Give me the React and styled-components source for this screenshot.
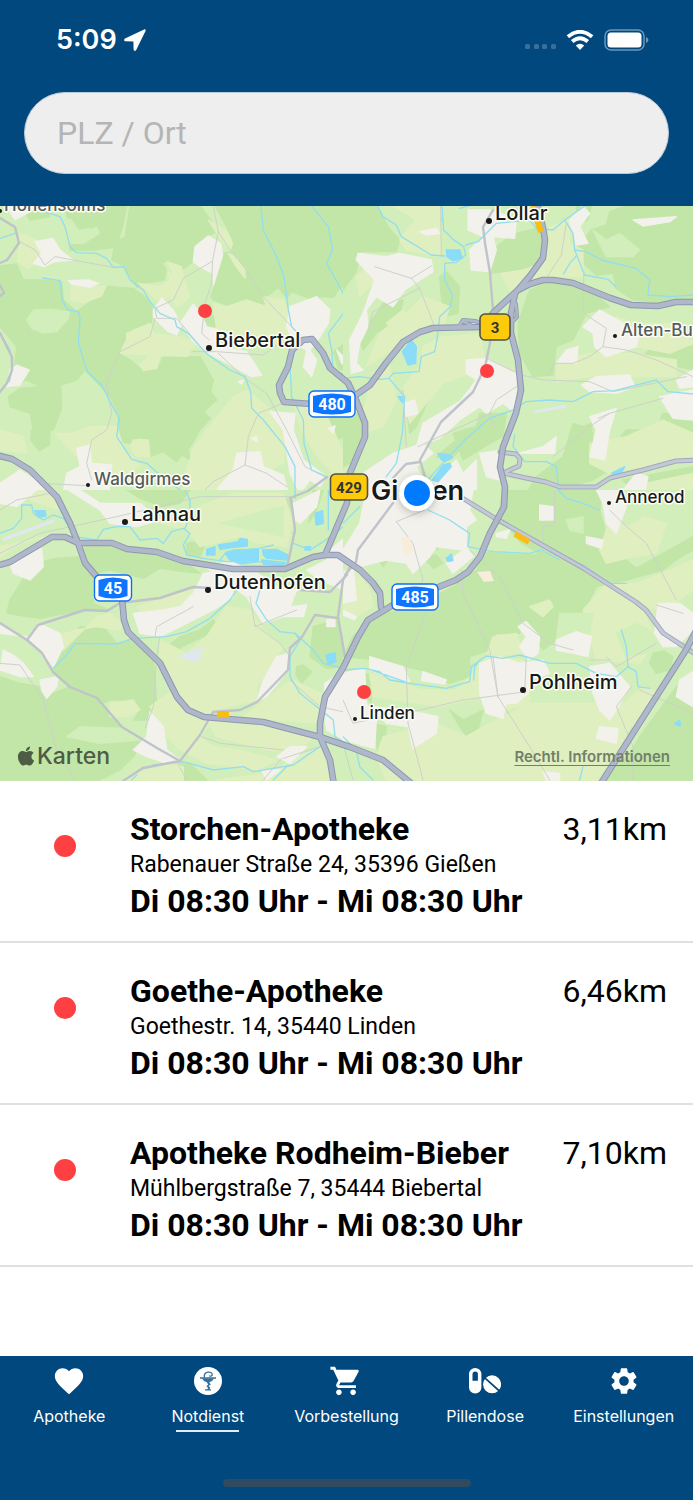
import React from "react";
import styled, { createGlobalStyle } from "styled-components";
import { MdFavorite, MdShoppingCart, MdSettings } from "react-icons/md";
import { FaApple } from "react-icons/fa";

const NAVY = "#00487d";
const RED = "#ff4043";

const GlobalStyle = createGlobalStyle`
  * { box-sizing: border-box; }
  body { margin: 0; background: #fff; color: #000; font-family: Roboto, sans-serif; }
`;

const Screen = styled.div`
  min-height: 100vh;
  display: flex;
  flex-direction: column;
`;

const Header = styled.header`
  background: ${NAVY};
  padding: 20px 24px 32px;
`;

const StatusBar = styled.div`
  height: 40px;
  margin-bottom: 32px;
  padding: 0 20px 0 32px;
  display: flex;
  align-items: center;
  justify-content: space-between;
  color: #fff;
`;

const StatusGroup = styled.div`
  display: flex;
  align-items: center;
  gap: ${(p) => p.$gap}px;
`;

const Clock = styled.time`
  font: 600 27px/40px Inter, sans-serif;
`;

const SearchInput = styled.input`
  display: block;
  width: 100%;
  height: 82px;
  padding: 0 32px;
  border: 1px solid #b9c9d6;
  border-radius: 41px;
  background: #eee;
  color: #222;
  font: 400 32px/40px Roboto, sans-serif;
  outline: none;
  &::placeholder { color: #b5b5b5; opacity: 1; }
`;

const MapFrame = styled.section`
  position: relative;
  aspect-ratio: 693 / 575;
  overflow: hidden;
  background: #d2eeba;
`;

const MapDrawing = styled.svg`
  display: block;
  width: 100%;
  height: 100%;
`;

const PlaceName = styled.text`
  font: ${(p) => p.$weight || 500} ${(p) => p.$size}px Inter, sans-serif;
  fill: ${(p) => (p.$muted ? "#555a58" : "#17191b")};
  stroke: #fbfdf6;
  stroke-width: 3px;
  stroke-linejoin: round;
  paint-order: stroke;
`;

const ShieldText = styled.text`
  font: 700 ${(p) => (p.$dark ? 15 : 16)}px Roboto, sans-serif;
  text-anchor: middle;
  fill: ${(p) => (p.$dark ? "#333" : "#fff")};
`;

const MapCredit = styled.div`
  position: absolute;
  left: 15px;
  bottom: 9px;
  display: flex;
  align-items: center;
  color: #4d5c43;
  font: 500 23px/32px Inter, sans-serif;
`;

const LegalLink = styled.a`
  position: absolute;
  right: 23px;
  bottom: 14px;
  color: #72806a;
  font: 600 15px/20px Inter, sans-serif;
  text-decoration: underline;
  text-underline-offset: 3px;
`;

const PharmacyList = styled.ul`
  margin: 0;
  padding: 0;
  list-style: none;
`;

const PharmacyRow = styled.li`
  display: flex;
  align-items: flex-start;
  padding: 28px 26px 20px 54px;
  border-bottom: 2px solid #e0e0e0;
`;

const Dot = styled.span`
  flex: none;
  width: 22px;
  height: 22px;
  margin: 26px 54px 0 0;
  border-radius: 50%;
  background: ${RED};
`;

const Details = styled.div`
  flex: 1;
  min-width: 0;
`;

const Name = styled.h2`
  margin: 0;
  font: 700 32px/40px Roboto, sans-serif;
`;

const Address = styled.p`
  margin: 0;
  font: 400 23px/32px Roboto, sans-serif;
`;

const Hours = styled.p`
  margin: 0;
  font: 700 32px/40px Roboto, sans-serif;
`;

const Distance = styled.span`
  font: 400 32px/40px Roboto, sans-serif;
`;

const BottomNav = styled.nav`
  margin-top: auto;
  padding: 8px 0 13px;
  background: ${NAVY};
`;

const Tabs = styled.div`
  display: grid;
  grid-template-columns: repeat(5, 1fr);
`;

const Tab = styled.a`
  display: flex;
  flex-direction: column;
  align-items: center;
  color: #fff;
  text-decoration: none;
  font: 400 16px/20px Inter, sans-serif;
  &::after {
    content: "";
    width: 63px;
    height: 2px;
    margin-top: 4px;
    background: ${(p) => (p.$active ? "#e6edf2" : "transparent")};
  }
`;

const TabIcon = styled.span`
  height: 34px;
  margin-bottom: 8px;
  display: flex;
  align-items: center;
`;

const HomeIndicator = styled.div`
  width: 248px;
  height: 8px;
  margin: 47px auto 0;
  border-radius: 4px;
  background: #304a5f;
`;

/* Land cover, four quadrants of the map drawn at triple scale */
const QUADRANTS = [
  {
    x: 0,
    y: 200,
    forest: [
      "M195 18H380L370 70 355 120 375 112 390 18H600L640 70 650 95 615 112 590 130 585 180 540 215 505 185 492 240 430 250 410 262 372 198 335 180 343 142 280 150 210 152 205 105 250 115 298 98 270 82 230 88 205 72Z",
      "M645 18H1050V255L1020 262 1000 292 960 290 940 300 875 275 860 295 835 262 800 290 790 318 745 298 690 320 640 300 632 290 650 240 668 160 690 155 735 235 738 210 695 150 698 120 680 80Z",
      "M0 198 50 192 70 240 120 240 185 245 190 300 230 335 290 290 318 258 360 262 400 265 440 295 462 330 452 372 400 385 372 425 358 460 390 480 430 512 470 510 490 472 600 470 640 540 632 575 650 600 610 635 632 655 600 690 565 750 570 780 545 765 530 785 490 755 450 770 445 720 418 712 392 730 370 728 352 680 358 645 330 590 255 510 230 540 182 555 185 625 160 690 100 690 90 640 30 620 25 590 60 565 120 560 80 540 20 560 45 490 50 440 0 380Z",
      "M95 690 120 668 150 690 148 735 118 753 92 720Z",
      "M560 350 580 320 615 345 640 350 650 380 620 382 595 360Z",
      "M1000 455 1050 420V520L1015 505Z",
      "M975 655 1045 650 1050 700 1010 720 975 690Z",
      "M60 18 130 18 150 50 90 60Z",
    ],
    meadow: [
      "M80 360 100 330 150 328 208 335 205 355 170 395 130 400 95 385Z",
      "M170 50 215 60 240 100 290 82 298 100 250 130 210 130Z",
      "M490 190 515 220 500 190Z",
    ],
    field: [
      "M60 100 110 120 120 180 85 205 52 185Z",
      "M215 255 260 262 318 258 305 288 250 308 212 300Z",
      "M500 185 545 200 550 230 570 290 530 320 510 295 470 300 440 270 415 250 480 260 510 240Z",
      "M625 60 680 95 698 130 690 150 650 100Z",
      "M685 160 710 175 735 210 735 235 705 195Z",
      "M360 460 380 420 380 400 450 370 460 400 540 410 590 430 560 470 480 465 470 505 430 512 420 495 450 465Z",
      "M640 310 680 320 740 300 800 320 790 290 850 300 865 340 870 400 830 440 690 440 650 390Z",
      "M620 690 700 590 740 570 790 610 820 640 860 700 850 790 790 820 740 850 600 895 545 880 560 810 580 745Z",
      "M400 720 445 720 450 770 410 770 390 740Z",
      "M165 700 215 700 270 680 350 680 370 740 420 800 310 860 260 800 220 760Z",
      "M0 690 70 710 80 760 0 750Z",
      "M880 620 970 625 1050 800V870L960 780 910 700Z",
    ],
    town: [
      "M18 18H110L90 35 45 60Z",
      "M105 125 158 115 180 150 218 180 165 185 130 200 100 190 125 160Z",
      "M585 140 625 108 662 130 668 165 640 255 638 220 600 200 580 185Z",
      "M205 242 265 240 295 250 270 262 215 252Z",
      "M460 330 485 295 520 330 540 370 580 312 605 345 620 380 655 390 660 440 740 455 785 525 755 530 700 500 655 475 615 455 575 420 545 370 530 405 505 395 460 350Z",
      "M870 320 950 290 990 330 985 370 960 410 930 450 950 480 935 530 910 500 920 450 880 430 860 380Z",
      "M50 495 88 510 60 555 20 560 30 510Z",
      "M810 635 885 640 880 690 910 780 980 830 960 860 930 840 900 880 870 820 850 690Z",
      "M230 745 268 735 275 790 335 795 325 900H250L190 875 200 820 240 800Z",
      "M710 760 780 755 790 800 850 825 870 900H740L650 870 700 810Z",
      "M0 850 60 810 150 870 170 900H0Z",
      "M985 685 1005 678 1000 700Z",
      "M715 545 730 540 725 552Z",
      "M755 715 770 710 772 725Z",
      "M1010 450 1040 480 1050 510 1025 490Z",
    ],
    water: [],
    river: [
      "M140 38 180 50 195 80 210 140 230 158 290 160 320 175 340 202 372 200 390 240 430 270 450 305 480 340 525 360 530 380 565 400 600 440 625 465 690 510 735 530 752 575 755 625 790 660 855 740 885 800 885 895",
      "M128 234 180 242 187 300 203 330 235 335 240 355 235 430 262 515 305 555 330 605 358 655 350 710 395 778 440 790 480 825 540 870 565 900",
      "M783 18 790 90 830 170 852 230 865 330 875 380 900 405 870 500 875 590 910 660 912 730 935 810 980 830",
      "M935 18 985 80 998 150 980 190 1035 290 1030 340 985 400 995 450 1000 510 1050 530",
      "M0 115 45 100",
      "M0 400 30 450 38 500 28 545",
    ],
    lane: [
      "M60 125 105 150 135 195 165 170 340 202 370 202",
      "M640 18 655 95 690 150 735 205 790 290 875 380",
      "M655 95 638 180 635 250 615 310 605 400 628 420",
      "M635 185 550 235 520 300 465 325 470 355 530 355 610 450",
      "M465 355 450 410 360 455 318 550 335 640 320 690 275 720 260 790 275 840",
      "M575 455 650 455 790 465 830 435",
      "M655 460 735 535 800 580 860 690 915 800 975 830",
      "M600 885 640 845 735 795 745 710 775 640 850 610",
      "M735 795 800 820 860 860",
      "M130 850 260 857",
    ],
  },
  {
    x: 343,
    y: 200,
    forest: [
      "M0 18H100L135 80 170 120 160 155 50 155 40 215 0 270Z",
      "M440 155 500 110 520 100 560 90 605 80 600 170 565 225 520 265 480 215 445 220Z",
      "M290 230 310 215 350 260 345 340 305 350 295 290Z",
      "M560 270 620 245 700 255 760 285 800 320 730 340 690 420 640 440 630 525 570 530 530 460 525 370Z",
      "M745 90 790 75 800 35 850 18H1050V295L950 308 870 300 820 265 810 220 760 225 720 190 700 190 700 140Z",
      "M700 18H745L735 60 700 70Z",
      "M940 425 1050 440V510L960 490 900 470Z",
      "M0 640 60 640 65 720 20 790 0 800Z",
      "M190 620 270 480 300 470 265 580 220 680 200 700Z",
      "M250 40 285 35 300 65 270 70Z",
      "M280 770 340 720 360 690 420 675 380 720 320 780Z",
      "M580 830 660 770 690 670 720 680 745 670 750 720 800 750 850 690 940 690 960 640 1050 650V720L880 740 830 790 750 840 640 870 640 900H540Z",
      "M840 840 1050 800V900H900Z",
      "M80 370 120 310 180 300 170 350 100 400 60 450 50 410Z",
      "M330 700 400 680 410 640 490 640 480 710 440 730 360 780Z",
    ],
    meadow: [
      "M750 90 790 120 830 100 890 150 870 170 790 170Z",
      "M640 550 760 530 880 560 920 540 960 600 900 630 800 640 710 640 620 700 550 690Z",
    ],
    field: [
      "M150 18 290 18 295 170 190 150 170 120 220 60Z",
      "M110 400 190 340 240 290 320 320 300 380 210 400 130 460 70 500Z",
      "M240 440 300 410 410 400 430 500 300 550 200 670 180 560 230 500Z",
      "M475 220 540 210 600 190 560 260 500 270Z",
      "M640 485 740 460 860 460 1000 480 1000 530 860 530 780 540 640 560Z",
      "M620 80 680 60 680 130 720 150 720 230 620 230 560 250 600 190Z",
      "M740 730 850 710 960 660 1050 700V770L900 800 800 820 740 790Z",
      "M820 350 880 370 1000 370 1050 430 980 460 880 440Z",
      "M90 520 140 500 160 600 120 680 60 700 60 640Z",
      "M860 860 1050 820V900H900Z",
      "M130 370 180 330 190 350 150 390Z",
      "M40 230 100 180 110 230 50 290Z",
    ],
    town: [
      "M375 30H450L520 60 515 115 450 110 460 150 440 215 385 210 380 150 420 110 375 90Z",
      "M45 160 130 170 170 160 265 180 270 215 215 250 185 270 150 320 100 290 70 330 75 380 50 430 40 490 60 510 25 520 20 420 60 340 95 240 40 180Z",
      "M680 60 720 18 740 40 710 80 735 130 700 135 690 100Z",
      "M370 480 430 475 520 520 518 640 480 610 430 640 410 620 350 660 290 715 220 740 240 670 350 605 370 580 400 540 370 520Z",
      "M720 380 770 330 825 360 890 400 880 440 790 470 755 440 750 400Z",
      "M640 490 670 450 705 440 700 490Z",
      "M715 555 760 530 860 525 875 560 820 580 740 575Z",
      "M740 650 820 625 800 690 785 780 740 770 760 690Z",
      "M950 590 1050 570V660L990 655Z",
      "M525 760 600 740 640 710 635 760Z",
      "M870 60 1000 50 980 65 900 78Z",
      "M60 820 150 760 240 730 270 760 220 800 250 860 340 780 360 820 400 780 400 900H30Z",
      "M410 760 480 750 470 840 430 830Z",
      "M840 870 880 820 915 830 900 900H820Z",
      "M180 610 215 600 225 640 190 650Z",
      "M230 95 280 85 290 100 250 105Z",
      "M1000 540 1050 510V560L1010 565Z",
    ],
    water: [
      "M310 150 350 150 358 175 330 182 312 170Z",
      "M178 455 205 420 220 440 218 490 195 495 185 470Z",
      "M268 840 300 795 320 790 325 800 285 845Z",
      "M805 820 845 800 835 820 815 825Z",
      "M165 590 178 590 178 608Z",
      "M285 760 320 765 328 772 305 785 295 778Z",
    ],
    river: [
      "M297 18 302 90 330 118 362 140 368 165 340 187 305 190 305 240 328 285 322 320 290 350 282 420 275 455 235 470 228 515 150 520 138 535 185 590 178 700 160 790 130 830",
      "M105 20 120 50 160 75 175 110 265 165 305 168",
      "M368 135 405 125 460 70 560 60 580 85 630 90 665 60 725 18",
      "M665 60 690 100 695 150 730 155 775 180 880 205 920 240 915 285 985 290 1050 285",
      "M695 150 725 225 795 238 818 260",
      "M700 168 680 190 662 222",
      "M0 535 50 530 110 538 138 535",
      "M245 850 290 800 365 720 440 655 510 630 550 605 620 600 690 605 750 575 815 572 940 540 975 575 1050 582",
      "M515 705 510 740 545 785 610 785 640 800 650 900",
      "M350 25 375 18",
    ],
    lane: [
      "M293 18 295 170M265 198 205 235 230 265 90 335 75 390M230 265 275 380M205 235 95 200",
      "M670 70 655 165 610 235M722 220 722 340 790 385 780 440 740 470 690 490 635 490 615 525M780 440 850 450 940 480 1050 530",
      "M430 475 535 525 600 540 740 545 810 575 1030 530M520 560 460 600 440 640 225 740M440 640 455 680",
      "M180 570 190 740M800 640 960 595M765 655 800 640 740 680 630 770",
    ],
  },
  {
    x: 0,
    y: 490,
    forest: [
      "M80 250 110 220 165 205 240 200 260 160 330 165 380 185 470 190 560 220 600 250 550 245 480 235 430 265 330 240 290 250 280 340 330 360 250 360 120 385 80 380 20 370 30 330Z",
      "M190 470 240 410 310 410 350 460 380 455 400 435 420 450 460 500 465 560 470 640 440 690 400 690 420 660 400 630 330 630 310 640 280 620 230 600 180 560 160 540Z",
      "M0 560 60 580 120 590 160 610 210 590 290 625 360 710 430 750 400 800 360 840 300 870H0Z",
      "M380 0H570L540 40 490 50 420 25Z",
      "M500 470 540 440 600 420 640 390 650 410 610 440 545 470 530 490Z",
      "M890 530 910 525 935 545 905 580 888 555Z",
      "M940 410 1010 390 1040 480V530L980 535 930 500Z",
      "M800 110 860 50 875 130 830 150Z",
      "M560 700 620 690 580 760 550 770 570 740Z",
      "M840 20 870 30 870 70 835 60Z",
      "M560 160 620 150 600 200 560 190Z",
      "M540 820 570 820 620 870H550Z",
      "M940 0 970 0 950 60 925 100 935 50Z",
    ],
    meadow: [
      "M660 100 800 60 850 50 850 140 760 120Z",
      "M200 740 240 710 370 715 420 750 300 760Z",
    ],
    field: [
      "M450 90 570 60 700 10 850 10 880 100 860 170 780 160 720 140 600 170 560 120Z",
      "M80 0H150L180 60 120 40 90 30Z",
      "M480 450 560 490 620 440 680 350 750 360 790 420 850 470 830 500 770 590 770 630 640 660 620 680 560 650 520 590 480 510Z",
      "M450 650 520 600 560 660 630 700 600 740 640 770 720 780 830 810 770 840 620 820 540 780 500 740Z",
      "M620 690 780 700 940 740 900 780 800 780 650 740Z",
      "M880 570 980 620 960 700 830 690 730 680 860 580Z",
      "M130 450 190 480 290 380 330 370 370 400 360 420 290 410 230 420Z",
      "M410 350 570 300 620 300 540 350 430 370Z",
      "M0 170 140 140 60 160 0 200Z",
      "M330 640 400 630 420 660 380 680 330 680Z",
      "M380 860 500 820 550 830 550 870H390Z",
      "M650 870 800 850 960 770 990 870Z",
    ],
    town: [
      "M0 0H110L50 50 0 40Z",
      "M205 0 240 0 300 40 420 40 480 90 410 110 330 100 300 60Z",
      "M30 225 125 175 130 230 90 270 40 250Z",
      "M0 400 80 450 115 400 180 430 190 470 160 530 130 490 80 440 0 430Z",
      "M400 370 490 360 540 350 580 310 610 250 690 240 700 320 640 360 560 400 480 440 420 430Z",
      "M615 230 690 215 760 240 830 290 890 300 870 350 920 345 910 380 850 380 790 400 740 320Z",
      "M400 780 440 740 450 665 490 710 500 780 540 810 500 820 440 800Z",
      "M830 500 865 490 865 540 800 620 770 635 790 570Z",
      "M10 480 40 495 70 520 100 560 60 560 0 540Z",
      "M120 570 175 560 170 590 140 625 125 600Z",
      "M880 40 960 0 950 50 900 100 885 90Z",
      "M990 180 1050 130V330L1030 300 960 270 920 240 980 210Z",
      "M975 580 1050 530V760L980 720 970 650Z",
      "M830 800 870 770 920 770 870 820Z",
      "M980 390 1005 385 1005 410 980 410Z",
      "M785 840 840 840 800 870Z",
    ],
    water: [
      "M675 190 700 180 775 178 775 215 720 222 690 210Z",
      "M788 180 830 178 865 195 862 210 800 205 790 195Z",
      "M620 178 645 170 645 195 620 195Z",
      "M655 165 715 155 720 145 742 148 742 168 700 172 660 178Z",
      "M105 62 135 62 138 78 115 82Z",
      "M945 70 968 62 970 100 948 105Z",
      "M978 495 1005 488 1008 515 985 525Z",
      "M785 210 858 218 850 228 790 222Z",
      "M915 170 932 170 930 180 915 180Z",
    ],
    river: [
      "M0 130 40 115 65 85 65 45 95 45 100 70 130 90 160 75 190 85 225 140 290 150 310 118 350 110 390 110 420 150 470 145 490 160 515 125 550 115 570 130 550 165 560 195 610 205 680 215 780 215 860 220",
      "M555 0 570 30 570 80 555 115",
      "M885 0 885 25M985 0V120M1050 95 1010 125 970 155 930 180 880 160",
      "M160 535 200 495 225 460 350 462 400 445 500 440 560 425 630 385 690 330 710 300",
      "M780 300 768 340 800 390 840 425 885 430 900 450 870 500 870 560 900 610 950 650 1000 690 1005 740 1050 770",
      "M885 430 940 480 970 520 1050 540",
      "M660 210 680 185 780 175 820 165",
      "M460 825 550 815 640 840 730 830 760 845 880 825 930 790 960 770M395 870 410 855",
      "M865 825 820 870",
    ],
    lane: [
      "M0 60 50 30 150 10M0 190 120 130 350 80 600 20 870 20",
      "M0 520 60 525 130 630 170 780 225 870",
      "M480 440 470 500 460 650 435 715M465 440 470 410 580 350",
      "M750 320 765 410 890 360M765 405 840 460 870 500",
      "M605 740 660 760 850 780M845 805 790 870M850 805 960 770M530 815 560 870",
      "M870 570 960 650 1050 670",
    ],
  },
  {
    x: 343,
    y: 490,
    forest: [
      "M480 0H780L770 60 800 170 880 235 960 190 1050 140V180L1000 210 960 240 850 270 760 290 720 370 740 410 700 430 640 450 600 480 540 390 530 430 460 430 440 480 380 500 380 560 320 580 250 545 190 530 110 510 0 500 30 440 100 370 200 360 330 290 400 240 460 110Z",
      "M320 660 360 690 420 660 405 720 380 750 350 710Z",
      "M570 670 645 670 640 720 580 715Z",
      "M930 490 960 480 990 500 980 540 940 550 920 520Z",
      "M890 740 1000 590 1050 570V870H780L860 790Z",
      "M550 780 600 740 620 760 590 810 540 810Z",
      "M670 710 700 720 710 770 680 760Z",
      "M60 550 85 555 85 640 70 620Z",
      "M90 700 130 710 120 810 105 790Z",
      "M250 130 280 140 285 180 265 160Z",
      "M240 200 280 195 300 220 270 235Z",
      "M290 100 340 125 360 150 310 130Z",
      "M60 60 110 55 95 80Z",
      "M100 200 150 190 120 230Z",
      "M920 720 1050 690V870H930Z",
    ],
    meadow: [
      "M480 100 530 160 580 190 520 190 390 180 430 130Z",
      "M670 90 720 80 720 130 680 120Z",
      "M650 370 750 370 740 430 640 450Z",
      "M820 430 880 400 920 420 960 480 850 500Z",
      "M0 110 50 20 80 0 120 20 60 120 0 180Z",
    ],
    field: [
      "M800 90 860 110 900 80 970 100 940 190 870 200 790 220 770 180Z",
      "M560 350 620 330 630 350 600 380Z",
      "M720 360 790 280 880 280 980 240 1050 210V300L980 350 900 360 940 450 890 520 760 510 740 440Z",
      "M380 560 430 500 540 510 560 590 560 640 450 670 420 620 290 650 90 620 80 550 140 570 240 600 340 600Z",
      "M280 700 370 740 440 700 560 640 850 640 870 690 850 740 760 870H130L100 800 120 740Z",
      "M450 440 520 430 540 490 430 500Z",
      "M0 240 40 240 80 300 90 350 40 380 0 370Z",
      "M830 650 900 590 950 610 890 720 850 700Z",
    ],
    town: [
      "M0 180 50 100 70 0H390L380 60 400 90 370 110 370 170 390 200 330 250 310 220 360 180 280 170 260 200 210 250 190 220 130 210 50 230 0 210Z",
      "M80 500 180 530 200 575 150 565 80 540Z",
      "M240 545 310 570 305 582 235 572Z",
      "M0 550 65 535 70 640 100 690 95 775 0 750Z",
      "M85 650 190 660 285 680 280 730 210 775 195 710 130 700Z",
      "M410 520 470 500 530 520 600 510 620 550 560 570 555 610 520 640 490 640 480 685 430 670 410 610Z",
      "M525 410 550 395 590 440 585 490 555 510 530 470 550 440Z",
      "M640 450 700 425 745 440 735 500 690 490 640 480Z",
      "M740 530 800 520 860 590 820 660 800 690 770 660 750 610Z",
      "M945 340 1010 340 1050 370V420L1000 470 960 470 935 430Z",
      "M760 0H835L850 50 820 130 790 100 780 40Z",
      "M770 710 825 715 820 760 760 745Z",
      "M590 45 630 50 630 90 590 90Z",
      "M730 140 780 150 775 175 730 160Z",
      "M1010 570 1050 545V650L1000 620Z",
      "M600 845 650 850 650 870H610Z",
      "M0 250 30 230 40 330 0 340Z",
      "M460 130 500 120 490 145 460 140Z",
      "M0 360 40 380 35 390 0 375Z",
    ],
    water: [
      "M310 205 325 192 330 212 315 215Z",
      "M995 702 1010 690 1012 708Z",
    ],
    river: [
      "M0 540 65 535 110 545 140 570 200 580 310 595 380 575 385 530 430 498 480 505 530 495 620 520 700 520 760 550 820 560 855 530 880 545 885 590 920 595M85 540 185 575M392 570 395 530 410 510",
      "M835 420 850 470 855 530M255 60 320 90 380 130 375 170 450 185 560 190 595 180 650 210M720 225 800 280 850 280",
      "M0 740 40 780 50 830 90 870M720 830 710 870M645 0 670 25 720 40 770 60M0 100 50 50",
    ],
    lane: [
      "M160 95 245 60 210 50M160 95 210 160 240 270 200 340M355 240 360 310 440 480 465 620 560 770 620 870",
      "M380 180 470 260 540 400 620 460 690 480M250 365 190 530 195 700",
      "M190 670 360 630 550 605M465 620 450 500M550 500 545 610",
      "M790 500 820 530 940 460M740 510 800 510M940 345 1020 370M820 650 870 770 870 870M865 590 820 650",
      "M635 0 635 105 600 110 600 180M800 60 840 100 910 160 1000 330M0 630 30 700 120 680M890 600 1050 670M0 760 30 870M195 700 240 870",
    ],
  },
];

const MOTORWAYS = [
  "M-4 455 12 459 30 470 57 497 70 523 78 543 85 563 97 577 122 598 124 620 128 632 160 663 177 697 188 710 204 717 263 722 320 737 350 747 383 760 412 784",
  "M-4 566 10 562 52 537 65 537 78 543 112 543 127 549 157 552 183 561 233 569 285 569 313 557 325 555 338 555 360 570 373 583 380 593 381 607",
  "M325 555 347 503 350 473 365 437 365 423 356 400 348 383 330 368 323 353 312 339 303 340 292 350 288 367 279 385 280 393 284 402 312 404",
  "M353 397 370 385 386 363 403 342 420 332 433 328 482 327 494 312 518 290 530 276 543 258 545 240 543 228 537 202",
  "M518 290 530 284 543 280 553 280 573 283 610 298 631 305 658 306 676 302 697 302",
  "M515 294 511 313 511 333 518 360 521 390 516 413 503 447 500 467 505 487 504 507 490 533 480 557 468 572 456 580 436 588 393 605 368 620 358 637 343 668 325 697 320 723 320 737 330 760 334 785",
  "M697 629 686 650 600 785",
];

const RAMPS = [
  "M459 326 463 320 475 321 484 324M462 321 477 328",
  "M516 304 517 317 512 322",
];

const HIGHWAYS = [
  "M464 499 493 517 583 568 636 602 646 610 663 633 697 655",
  "M503 473 526 478 546 482 560 487 596 487 610 478 643 470 676 461 697 460",
  "M500 452 516 454 520 459 519 466 503 473",
];

const SECONDARY = [
  "M493 210 483 227 485 243 490 273 493 310 490 343 485 367 473 392 441 422 420 460 425 477M420 462 406 464 393 478",
  "M393 503 358 550 356 562 345 575",
  "M0 623 27 640 42 653 53 672 70 687 97 698 122 727 157 748 180 761 200 735 213 712 240 710 257 702 288 670 290 648 302 637 315 615 337 618",
  "M27 640 38 625 85 610 107 611 120 603 160 598 193 587 210 588M300 590 330 592 347 575",
  "M350 567 343 580 338 617 345 657",
  "M123 781 143 768 180 761",
  "M0 263 7 260 19 243 15 227 0 218M0 333 12 357 12 370 7 383 0 392M0 285 4 293 0 296",
  "M290 498 308 491 327 477M291 499 295 530 288 563",
];

const PLACES = [
  { name: "Hohensolms", x: 4, y: 211, size: 17, muted: true, dot: [0, 211, 2] },
  { name: "Lollar", x: 495, y: 220, size: 20, dot: [489, 221, 3] },
  { name: "Biebertal", x: 215, y: 347, size: 20, dot: [209, 348, 3] },
  { name: "Alten-Buseck", x: 621, y: 336, size: 17, muted: true, dot: [615, 336, 2] },
  { name: "Waldgirmes", x: 94, y: 485, size: 17, muted: true, dot: [88, 485, 2] },
  { name: "Lahnau", x: 131, y: 521, size: 20, dot: [125, 522, 3] },
  { name: "Gießen", x: 371, y: 500, size: 27, weight: 600 },
  { name: "Annerod", x: 615, y: 503, size: 17, dot: [609, 503, 2] },
  { name: "Dutenhofen", x: 214, y: 589, size: 20, dot: [208, 590, 3] },
  { name: "Pohlheim", x: 529, y: 689, size: 20, dot: [523, 690, 3] },
  { name: "Linden", x: 360, y: 719, size: 17, dot: [355, 719, 2] },
];

const SHIELDS = [
  { label: "480", x: 332, y: 404, w: 46 },
  { label: "45", x: 113, y: 588, w: 37 },
  { label: "485", x: 415, y: 597, w: 46 },
  { label: "429", x: 349, y: 487, w: 37, yellow: true },
  { label: "3", x: 495, y: 327, w: 30, yellow: true },
];

const PINS = [[205, 311], [487, 371], [364, 692]];

const PHARMACIES = [
  { name: "Storchen-Apotheke", address: "Rabenauer Straße 24, 35396 Gießen", distance: "3,11km" },
  { name: "Goethe-Apotheke", address: "Goethestr. 14, 35440 Linden", distance: "6,46km" },
  { name: "Apotheke Rodheim-Bieber", address: "Mühlbergstraße 7, 35444 Biebertal", distance: "7,10km" },
];

const Shield = ({ label, x, y, w, yellow }) => {
  const l = x - w / 2;
  return (
    <g>
      <rect x={l} y={y - 13} width={w} height={26} rx={5}
        fill={yellow ? "#fecb0b" : "#fff"} stroke={yellow ? "#51504b" : "#0b70f8"} strokeWidth={yellow ? 1.6 : 1.4} />
      {!yellow && (
        <path fill="#0d75ff" d={`M${l + 4} ${y - 8}Q${x} ${y - 13} ${l + w - 4} ${y - 8}V${y + 8}Q${x} ${y + 13} ${l + 4} ${y + 8}Z`} />
      )}
      <ShieldText x={x} y={y + 6} $dark={yellow}>{label}</ShieldText>
    </g>
  );
};

const Strokes = ({ paths, color, width }) => (
  <g fill="none" stroke={color} strokeWidth={width} strokeLinejoin="round" strokeLinecap="round">
    {paths.map((d) => <path key={d} d={d} />)}
  </g>
);

const Areas = ({ paths, color }) => (
  <g fill={color} stroke={color} strokeWidth="4" strokeLinejoin="round">
    {paths.map((d) => <path key={d} d={d} />)}
  </g>
);

const RegionMap = () => (
  <MapDrawing viewBox="0 206 693 575" preserveAspectRatio="xMidYMid slice" role="img" aria-label="Karte der Region Gießen">
    <defs>
      <filter id="pinShadow" x="-50%" y="-50%" width="200%" height="200%">
        <feDropShadow dx="0" dy="2" stdDeviation="4" floodOpacity="0.25" />
      </filter>
      <clipPath id="quadrant"><path d="M0 0H1052V905H0Z" /></clipPath>
    </defs>
    {QUADRANTS.map((q) => (
      <g key={`${q.x}-${q.y}`} transform={`translate(${q.x} ${q.y}) scale(0.33333)`} clipPath="url(#quadrant)">
        <path d="M0 0H1052V905H0Z" fill="#d2eeba" />
        <Areas paths={q.forest} color="#c2e6a8" />
        <Areas paths={q.field} color="#e0efbf" />
        <Areas paths={q.meadow} color="#d2eeba" />
        <Areas paths={q.town} color="#f2f1ec" />
        <Areas paths={q.water} color="#8adcf8" />
        <Strokes paths={q.lane} color="#cdd1cb" width={3} />
        <Strokes paths={q.river} color="#93deee" width={4} />
      </g>
    ))}
    <path fill="#dfe7ef" d="M2 538 54 519 55 522 4 541ZM178 656 206 646 200 654 201 660 192 662ZM532 411 567 404 566 408 534 413Z" />
    <path fill="#f8ecda" d="M401 538 410 537 413 552 404 555ZM477 572 490 571 494 581 484 582Z" />
    <Strokes paths={SECONDARY} color="#bfc3ca" width={2.4} />
    <Strokes paths={HIGHWAYS} color="#a0a8bc" width={5} />
    <Strokes paths={HIGHWAYS} color="#c3c9d6" width={3} />
    <Strokes paths={RAMPS} color="#8f98b2" width={4} />
    <Strokes paths={MOTORWAYS} color="#8e97b1" width={6.6} />
    <Strokes paths={RAMPS} color="#afb7ca" width={2.4} />
    <Strokes paths={MOTORWAYS} color="#afb7ca" width={4.6} />
    <path stroke="#fbbc14" strokeWidth="6" d="M217 714H229M515 534 529 542M537 220 541 232M532 206 535 208" />
    {PLACES.map((p) => (
      <g key={p.name}>
        {p.dot && <circle cx={p.dot[0]} cy={p.dot[1]} r={p.dot[2]} fill="#17191b" />}
        <PlaceName x={p.x} y={p.y} $size={p.size} $weight={p.weight} $muted={p.muted}>{p.name}</PlaceName>
      </g>
    ))}
    {SHIELDS.map((s) => <Shield key={s.label} {...s} />)}
    {PINS.map(([x, y]) => <circle key={x} cx={x} cy={y} r="7" fill={RED} />)}
    <circle cx="417" cy="493" r="18" fill="#fff" filter="url(#pinShadow)" />
    <circle cx="417" cy="493" r="13" fill="#007aff" />
  </MapDrawing>
);

const LocationArrow = () => (
  <svg width="22" height="22" viewBox="0 0 22 22" fill="#fff" aria-hidden="true">
    <path d="M20.1.4 1 9.6C-.2 10.2 0 12.2 1.4 12.2L9.4 12.4 9.6 20.4C9.6 22 11.6 22.3 12.2 20.9L21.5 2C22 .8 21.2-.1 20.1.4Z" />
  </svg>
);

const SignalDots = () => (
  <svg width="32" height="20" viewBox="0 0 32 20" fill="#3a6f99" aria-hidden="true">
    {[1, 10, 18, 27].map((x) => <rect key={x} x={x} y="14" width="5" height="5" rx="1.5" />)}
  </svg>
);

const Wifi = () => (
  <svg width="28" height="20" viewBox="0 0 28 20" aria-hidden="true">
    <g fill="none" stroke="#fff" strokeWidth="3.9">
      <path d="M1.9 6.8Q14-3.2 26.1 6.8" />
      <path d="M6.2 11.6Q14 5 21.8 11.6" />
    </g>
    <path fill="#fff" d="M9.8 15.4Q14 11.9 18.2 15.4L14 20Z" />
  </svg>
);

const Battery = () => (
  <svg width="45" height="22" viewBox="0 0 45 22" aria-hidden="true">
    <rect x="1" y="1" width="39" height="20" rx="6" fill="none" stroke="#6c96b5" strokeWidth="1.5" />
    <rect x="3.5" y="3.5" width="34" height="15" rx="3.5" fill="#fff" />
    <path d="M42 8Q44.5 9 44.5 11T42 14Z" fill="#6c96b5" />
  </svg>
);

const PharmacyBowl = () => (
  <svg width="28" height="28" viewBox="0 0 28 28" aria-hidden="true">
    <circle cx="14" cy="14" r="14" fill="#fff" />
    <g fill="none" stroke="#34709b" strokeWidth="1.3">
      <path d="M10.4 10.3C9.2 4.2 18 3.6 18.3 7.6C18.3 9 17 9.3 15.2 8.8M6 11H22" />
    </g>
    <path fill="#34709b" d="M8 11.5H20Q18.5 14.6 15.2 15.2L16.8 17.4 14.6 19 16.2 20.6 15.6 22.2H17V23.4H11V22.2H13.2L14.2 21 12.4 19.2 14.2 17.4 12.8 15.2Q9.5 14.6 8 11.5Z" />
  </svg>
);

const Pills = () => (
  <svg width="32" height="26" viewBox="0 0 32 26" aria-hidden="true">
    <rect width="12.4" height="25.5" rx="6.2" fill="#fff" />
    <path fill={NAVY} d="M3.5 12.8V6.4Q3.5 3.6 6.2 3.6T8.9 6.4V12.8Z" />
    <circle cx="23.1" cy="16.3" r="9" fill="#fff" />
    <path stroke={NAVY} strokeWidth="1.7" d="M15.8 9.9 30.4 23" />
  </svg>
);

const TABS = [
  { label: "Apotheke", icon: <MdFavorite size={34} /> },
  { label: "Notdienst", icon: <PharmacyBowl />, active: true },
  { label: "Vorbestellung", icon: <MdShoppingCart size={34} /> },
  { label: "Pillendose", icon: <Pills /> },
  { label: "Einstellungen", icon: <MdSettings size={32} /> },
];

export default function App() {
  return (
    <Screen>
      <GlobalStyle />
      <Header>
        <StatusBar>
          <StatusGroup $gap={7}><Clock>5:09</Clock><LocationArrow /></StatusGroup>
          <StatusGroup $gap={10}><SignalDots /><Wifi /><Battery /></StatusGroup>
        </StatusBar>
        <SearchInput type="search" aria-label="PLZ / Ort" placeholder="PLZ / Ort" />
      </Header>
      <main>
        <MapFrame>
          <RegionMap />
          <MapCredit><FaApple size={22} />Karten</MapCredit>
          <LegalLink href="#legal">Rechtl. Informationen</LegalLink>
        </MapFrame>
        <PharmacyList>
          {PHARMACIES.map((p) => (
            <PharmacyRow key={p.name}>
              <Dot />
              <Details>
                <Name>{p.name}</Name>
                <Address>{p.address}</Address>
                <Hours>Di 08:30 Uhr - Mi 08:30 Uhr</Hours>
              </Details>
              <Distance>{p.distance}</Distance>
            </PharmacyRow>
          ))}
        </PharmacyList>
      </main>
      <BottomNav>
        <Tabs>
          {TABS.map((t) => (
            <Tab key={t.label} href={`#${t.label.toLowerCase()}`} $active={t.active} aria-current={t.active ? "page" : undefined}>
              <TabIcon>{t.icon}</TabIcon>
              {t.label}
            </Tab>
          ))}
        </Tabs>
        <HomeIndicator />
      </BottomNav>
    </Screen>
  );
}
